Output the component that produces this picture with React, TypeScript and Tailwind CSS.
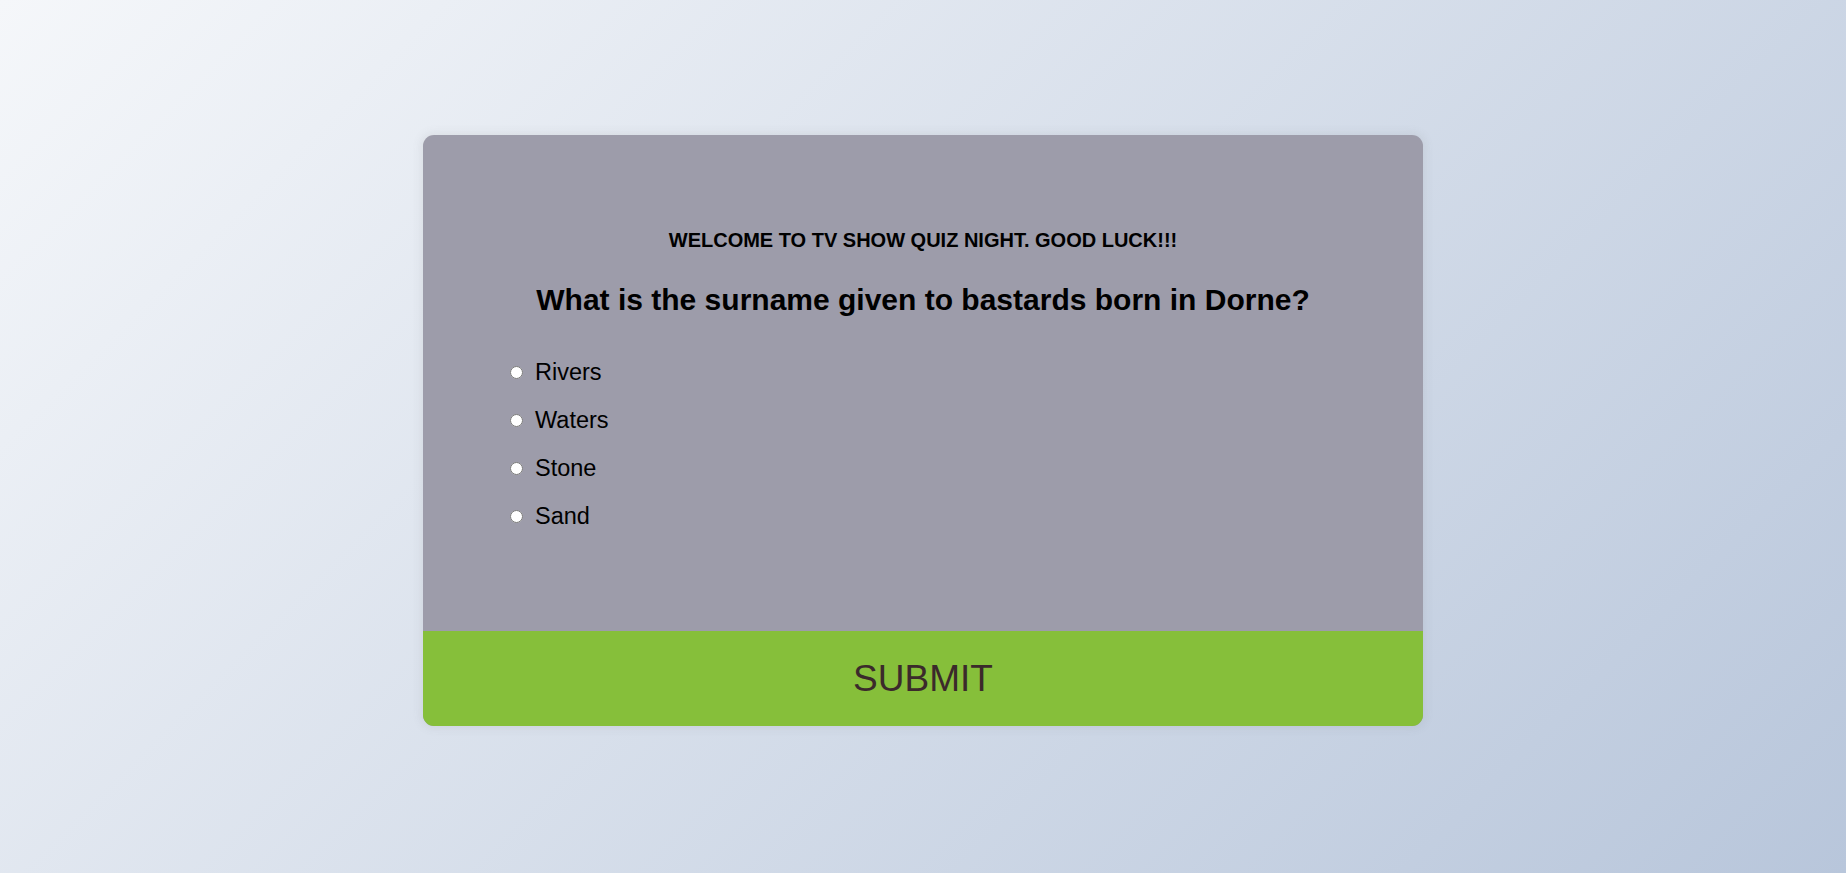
import React, { useState } from 'react';

const QUIZ = {
  welcome: 'WELCOME TO TV SHOW QUIZ NIGHT. GOOD LUCK!!!',
  question: 'What is the surname given to bastards born in Dorne?',
  answers: ['Rivers', 'Waters', 'Stone', 'Sand'],
};

const App: React.FC = () => {
  const [picked, setPicked] = useState<string | null>(null);

  return (
    <div className="min-h-screen w-full bg-[#b8c6db] bg-[linear-gradient(315deg,#b8c6db_0%,#f5f7fa_100%)] flex justify-center pt-[135px] font-['Liberation_Sans',Arial,sans-serif]">
      <div className="w-[1000px] h-[591px] flex flex-col rounded-[11px] overflow-hidden bg-[#9d9caa] shadow-[0_0_10px_2px_rgba(100,100,100,0.1)]">
        <div className="flex-1 flex flex-col pt-[93px]">
          <h3 className="text-center text-[20px] leading-[24px] font-bold text-black">{QUIZ.welcome}</h3>
          <h2 className="mt-[30px] text-center text-[30px] leading-[36px] font-bold text-black">{QUIZ.question}</h2>
          <ul className="mt-[41px] pl-[87px] flex flex-col gap-[21px]">
            {QUIZ.answers.map(answer => (
              <li key={answer} className="flex items-center h-[27px]">
                <input
                  type="radio"
                  name="answer"
                  id={answer}
                  checked={picked === answer}
                  onChange={() => setPicked(answer)}
                  className="w-[13px] h-[13px]"
                />
                <label htmlFor={answer} className="ml-[12px] text-[23.5px] leading-[27px] text-black">
                  {answer}
                </label>
              </li>
            ))}
          </ul>
        </div>
        <button className="h-[95px] w-full bg-[#86bf3a] text-[37px] text-[#3b2a2b] flex items-center justify-center">
          SUBMIT
        </button>
      </div>
    </div>
  );
};

export default App;
